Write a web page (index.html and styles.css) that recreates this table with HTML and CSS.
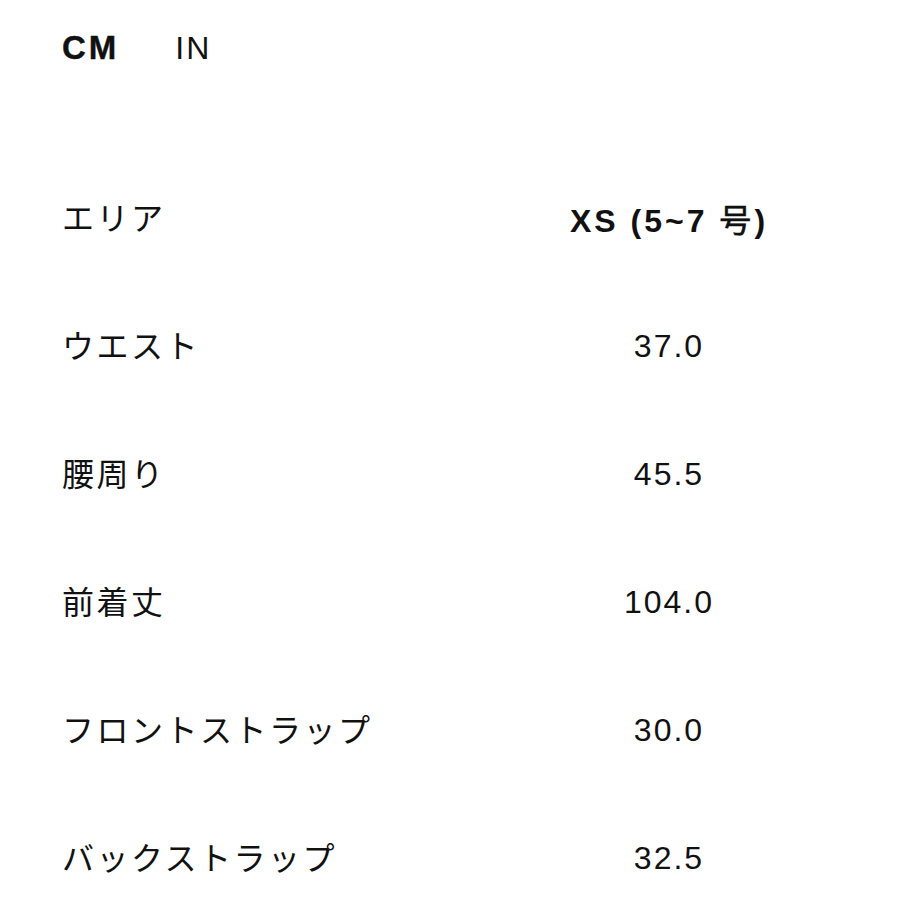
FILE: index.html
```html
<!DOCTYPE html>
<html lang="ja">
<head>
<meta charset="utf-8">
<link rel="stylesheet" href="styles.css">
</head>
<body>
<div class="page">
  <div class="units">
    <span class="unit active">CM</span>
    <span class="unit">IN</span>
  </div>
  <div class="table">
    <div class="row head">
      <div class="label">エリア</div>
      <div class="value bold">XS (5~7 <span class="cjk">号</span>)</div>
    </div>
    <div class="row">
      <div class="label">ウエスト</div>
      <div class="value">37.0</div>
    </div>
    <div class="row">
      <div class="label">腰周り</div>
      <div class="value">45.5</div>
    </div>
    <div class="row">
      <div class="label">前着丈</div>
      <div class="value">104.0</div>
    </div>
    <div class="row">
      <div class="label">フロントストラップ</div>
      <div class="value">30.0</div>
    </div>
    <div class="row">
      <div class="label">バックストラップ</div>
      <div class="value">32.5</div>
    </div>
  </div>
</div>
</body>
</html>
```
FILE: styles.css
```css
html, body {
  margin: 0;
  padding: 0;
  background: #fff;
}
body {
  width: 900px;
  height: 900px;
  overflow: hidden;
  color: #111;
  font-family: "Liberation Sans", Arial, "Noto Sans CJK JP", sans-serif;
}
.page {
  padding-left: 62px;
  padding-right: 102px;
}
.units {
  height: 96px;
  display: flex;
  align-items: center;
  gap: 56px;
  font-size: 32px;
  letter-spacing: 2px;
}
.unit.active {
  font-size: 33px;
  font-weight: bold;
  letter-spacing: 3px;
  -webkit-text-stroke: 0.4px #111;
}
.table {
  margin-top: 58px;
}
.row {
  display: grid;
  grid-template-columns: 1fr 260px;
  align-items: center;
  height: 128px;
}
.label {
  font-family: "Noto Sans CJK JP", sans-serif;
  font-size: 32px;
  letter-spacing: 2.5px;
  line-height: 1;
  padding-bottom: 4px;
}
.value {
  text-align: center;
  font-size: 32px;
  letter-spacing: 2px;
  padding-left: 2px;
  white-space: nowrap;
}
.value.bold {
  font-weight: bold;
  letter-spacing: 3px;
}
.cjk {
  font-family: "Noto Sans CJK JP", sans-serif;
  font-weight: normal;
  -webkit-text-stroke: 0.6px #111;
}
```
